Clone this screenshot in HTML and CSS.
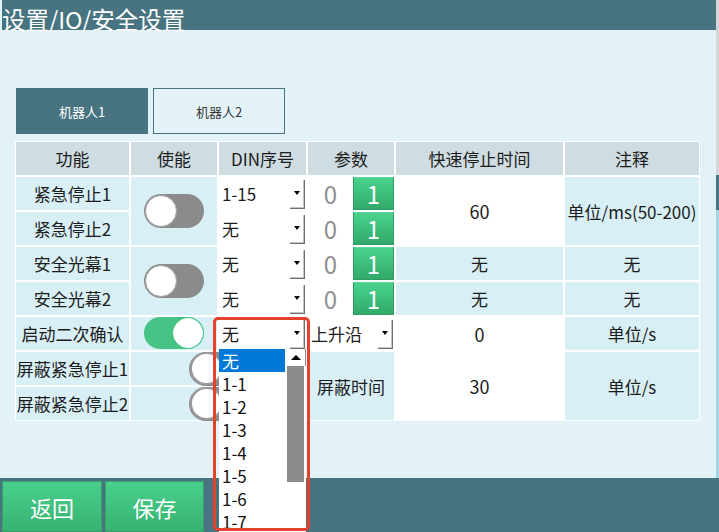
FILE: index.html
```html
<!DOCTYPE html>
<html lang="zh">
<head>
<meta charset="utf-8">
<title>安全设置</title>
<link rel="stylesheet" href="styles.css">
</head>
<body>
<div class="app">
  <div class="upper">
    <div class="main">
      <div class="titlebar"><span class="ttext">设置/IO/安全设置</span></div>
      <div class="content">
        <div class="tabs">
          <div class="tab active">机器人1</div>
          <div class="tab">机器人2</div>
        </div>
        <div class="grid">
          <div class="c hd">功能</div>
          <div class="c hd">使能</div>
          <div class="c hd">DIN序号</div>
          <div class="c hd">参数</div>
          <div class="c hd">快速停止时间</div>
          <div class="c hd">注释</div>

          <div class="c">紧急停止1</div>
          <div class="c r2"><div class="tog"><div class="knob"></div></div></div>
          <div class="c sel"><span class="st">1-15</span><span class="dd"><i class="tri"></i></span></div>
          <div class="c param"><span class="zero">0</span><span class="one">1</span></div>
          <div class="c w r2 num">60</div>
          <div class="c r2 note">单位/ms(50-200)</div>

          <div class="c">紧急停止2</div>
          <div class="c sel"><span class="st">无</span><span class="dd"><i class="tri"></i></span></div>
          <div class="c param"><span class="zero">0</span><span class="one">1</span></div>

          <div class="c">安全光幕1</div>
          <div class="c r2"><div class="tog"><div class="knob"></div></div></div>
          <div class="c sel"><span class="st">无</span><span class="dd"><i class="tri"></i></span></div>
          <div class="c param"><span class="zero">0</span><span class="one">1</span></div>
          <div class="c">无</div>
          <div class="c">无</div>

          <div class="c">安全光幕2</div>
          <div class="c sel"><span class="st">无</span><span class="dd"><i class="tri"></i></span></div>
          <div class="c param"><span class="zero">0</span><span class="one">1</span></div>
          <div class="c">无</div>
          <div class="c">无</div>

          <div class="c">启动二次确认</div>
          <div class="c"><div class="tog on"><div class="knob"></div></div></div>
          <div class="c sel"><span class="st">无</span><span class="dd"><i class="tri"></i></span></div>
          <div class="c sel"><span class="st">上升沿</span><span class="dd"><i class="tri"></i></span></div>
          <div class="c w num">0</div>
          <div class="c">单位/s</div>

          <div class="c">屏蔽紧急停止1</div>
          <div class="c start"><div class="tog shifted"><div class="knob"></div></div></div>
          <div class="c"></div>
          <div class="c r2">屏蔽时间</div>
          <div class="c w r2 num">30</div>
          <div class="c r2">单位/s</div>

          <div class="c">屏蔽紧急停止2</div>
          <div class="c start"><div class="tog shifted"><div class="knob"></div></div></div>
          <div class="c"></div>
        </div>
      </div>
    </div>
    <div class="vscroll">
      <div class="vs-a"></div>
      <div class="vs-b"></div>
      <div class="vs-c"></div>
    </div>
  </div>
  <div class="footer">
    <button class="fbtn">返回</button>
    <button class="fbtn">保存</button>
  </div>

  <div class="plist">
    <div class="items">
      <div class="item picked">无</div>
      <div class="item">1-1</div>
      <div class="item">1-2</div>
      <div class="item">1-3</div>
      <div class="item">1-4</div>
      <div class="item">1-5</div>
      <div class="item">1-6</div>
      <div class="item">1-7</div>
    </div>
    <div class="sbar">
      <div class="sb-up"><i class="tri-up"></i></div>
      <div class="sb-thumb"></div>
    </div>
  </div>
  <div class="ring"></div>
</div>
</body>
</html>
```

FILE: styles.css
```css
html, body {
  margin: 0;
  padding: 0;
}
body {
  font-family: "Noto Sans CJK SC", "Noto Sans", sans-serif;
  color: #1c1c1c;
}
.app {
  width: 719px;
  height: 532px;
  position: relative;
  overflow: hidden;
  background: #E3F2F7;
  display: flex;
  flex-direction: column;
}
.upper {
  flex: 1;
  display: flex;
  min-height: 0;
}
.main {
  flex: 1;
  display: flex;
  flex-direction: column;
  min-width: 0;
}
.titlebar {
  height: 30px;
  margin-left: 2px;
  background: #477480;
  color: #fff;
  white-space: nowrap;
}
.ttext {
  display: block;
  font-size: 23.5px;
  line-height: 38px;
  height: 30px;
}
.content {
  flex: 1;
  padding: 58px 0 0 15px;
}
.tabs {
  display: flex;
  gap: 5px;
  margin-left: 1px;
}
.tab {
  width: 132px;
  height: 46px;
  box-sizing: border-box;
  display: flex;
  align-items: center;
  justify-content: center;
  font-size: 13px;
  color: #3a3a3a;
  border: 1px solid #477480;
}
.tab.active {
  background: #477480;
  color: #fff;
}
.grid {
  margin-top: 7px;
  display: grid;
  grid-template-columns: 113px 86px 87px 86px 167px 134px;
  grid-template-rows: repeat(8, 33px);
  gap: 2px;
  padding: 1px;
  background: #fff;
  width: max-content;
}
.c {
  background: #D8EFF5;
  display: flex;
  align-items: center;
  justify-content: center;
  font-size: 17px;
  white-space: nowrap;
  min-width: 0;
}
.c.hd {
  background: #CFDCE1;
}
.c.w {
  background: #fff;
}
.c.r2 {
  grid-row: span 2;
}
.c.num {
  font-size: 18px;
}
.c.start {
  justify-content: flex-start;
}
.sel {
  background: #fff;
  justify-content: flex-start;
  align-items: center;
  padding-left: 3px;
}
.sel .st {
  flex: 1;
}
.dd {
  align-self: stretch;
  width: 14px;
  margin: 3px 1px 1px 0;
  border-right: 1px solid #6f6f6f;
  border-bottom: 1px solid #6f6f6f;
  box-shadow: inset -1px -1px 0 #c4c4c4;
  display: flex;
  align-items: center;
  justify-content: center;
}
.tri {
  width: 0;
  height: 0;
  border-left: 3.5px solid transparent;
  border-right: 3.5px solid transparent;
  border-top: 4px solid #000;
  margin-bottom: 2px;
}
.param {
  background: #fff;
  justify-content: flex-start;
  align-items: stretch;
}
.zero {
  flex: 0 0 45px;
  display: flex;
  align-items: center;
  justify-content: center;
  color: #8f8f8f;
  font-size: 24px;
}
.one {
  flex: 1;
  display: flex;
  align-items: center;
  justify-content: center;
  color: #fff;
  font-size: 24px;
  background: linear-gradient(#4AD38E, #31A96B);
  border: 1px solid #2E9C62;
  border-top-color: #5BD99A;
}
.tog {
  width: 60px;
  height: 34px;
  box-sizing: border-box;
  border-radius: 17px;
  background: #8B8B8B;
  display: flex;
  align-items: center;
  padding: 0 1px;
  flex: 0 0 auto;
}
.tog.on {
  background: #45C485;
  justify-content: flex-end;
  height: 32px;
  margin-top: -2px;
}
.knob {
  width: 32px;
  height: 32px;
  border-radius: 50%;
  background: #fff;
  border: 1px solid #a3a3a3;
  box-sizing: border-box;
}
.tog.on .knob {
  width: 30px;
  height: 30px;
  border-color: #fff;
}
.tog.shifted {
  margin-left: 58px;
}
.tog.shifted .knob {
  width: 33px;
  height: 33px;
  border: 2px solid #9a9a9a;
}
.vscroll {
  width: 3px;
  display: flex;
  flex-direction: column;
}
.vs-a {
  height: 175px;
  background: #D3D7D8;
}
.vs-b {
  height: 35px;
  background: #477480;
}
.vs-c {
  flex: 1;
  background: #A3D5E4;
}
.footer {
  height: 54px;
  box-sizing: border-box;
  background: #477480;
  display: flex;
  gap: 3px;
  padding: 3px 0 0 2px;
}
.fbtn {
  width: 100px;
  height: 51px;
  margin: 0;
  padding: 0;
  border: 1px solid #3A9F6A;
  background: linear-gradient(#4AD08C, #37B271);
  color: #fff;
  font-family: "Noto Sans CJK SC", "Noto Sans", sans-serif;
  font-size: 22px;
}
.fbtn + .fbtn {
  width: 99px;
}
.plist {
  position: absolute;
  left: 219px;
  top: 349px;
  width: 87px;
  height: 183px;
  background: #fff;
  display: flex;
  overflow: hidden;
}
.items {
  width: 66px;
}
.item {
  height: 23px;
  line-height: 23px;
  padding-left: 3px;
  font-size: 17px;
  color: #111;
}
.item.picked {
  background: #0078D7;
  color: #fff;
}
.sbar {
  margin-left: 1px;
  width: 20px;
  display: flex;
  flex-direction: column;
}
.sb-up {
  height: 17px;
  border-right: 1px solid #8a8a8a;
  display: flex;
  align-items: center;
  justify-content: center;
}
.tri-up {
  width: 0;
  height: 0;
  border-left: 5px solid transparent;
  border-right: 5px solid transparent;
  border-bottom: 5px solid #000;
}
.sb-thumb {
  height: 116px;
  margin: 0 2px 0 1px;
  background: #8C8C8C;
}
.ring {
  position: absolute;
  left: 213px;
  top: 317px;
  width: 97px;
  height: 214px;
  box-sizing: border-box;
  border: 3px solid #E6412D;
  border-radius: 5px;
  pointer-events: none;
}
```
